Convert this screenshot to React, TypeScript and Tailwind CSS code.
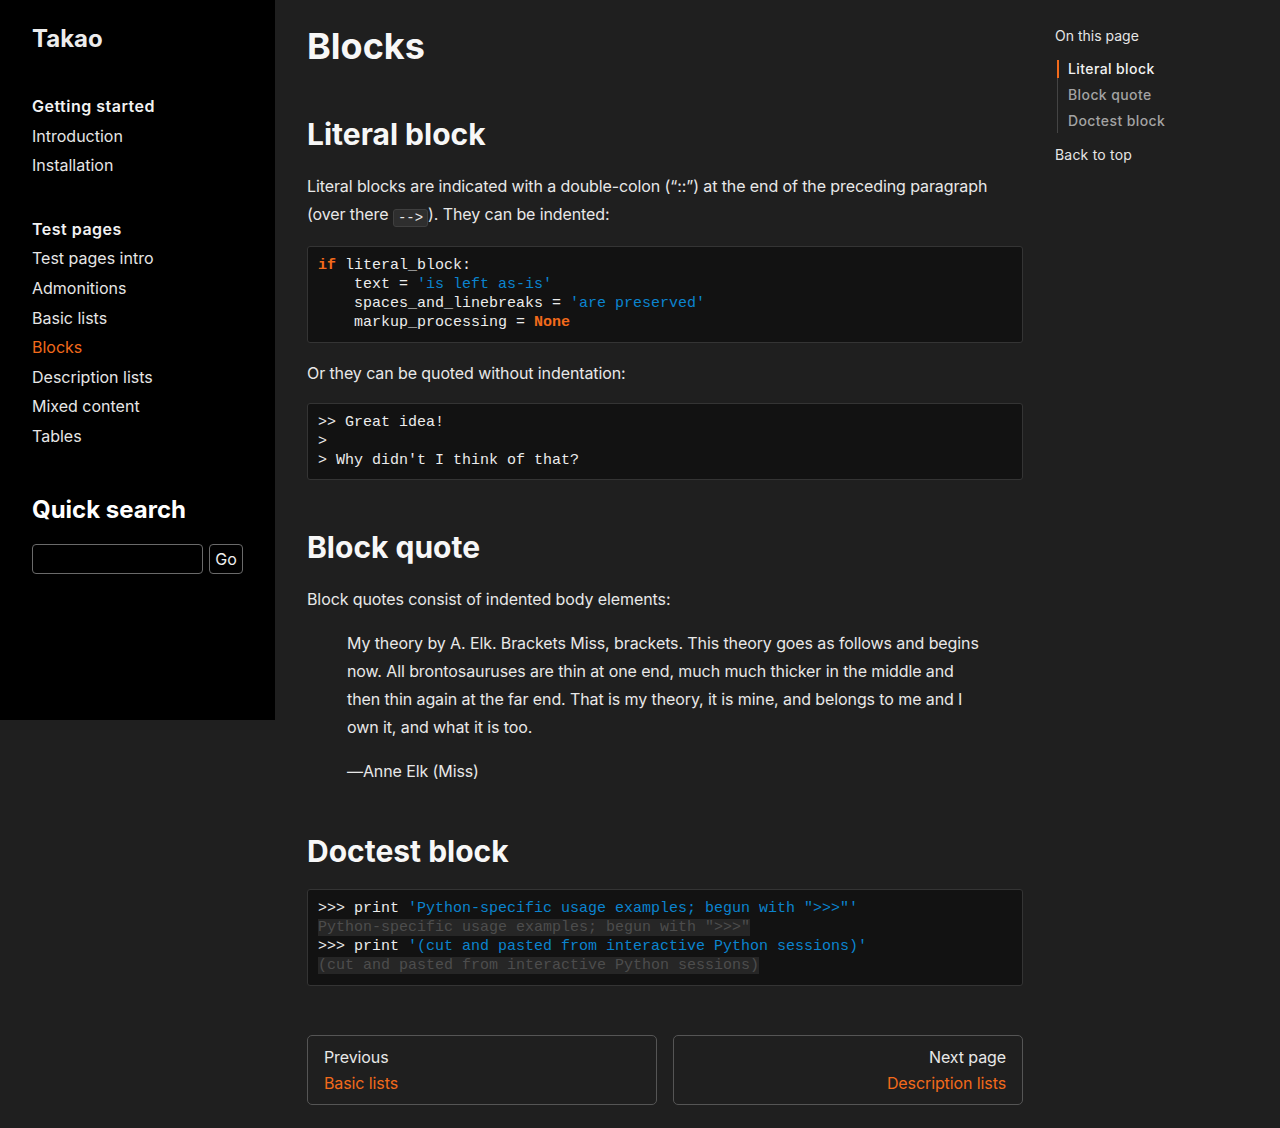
import React from 'react';

const ORANGE = 'text-[#f26a1b]';

const navGroups = [
  { title: 'Getting started', items: ['Introduction', 'Installation'] },
  {
    title: 'Test pages',
    items: ['Test pages intro', 'Admonitions', 'Basic lists', 'Blocks', 'Description lists', 'Mixed content', 'Tables'],
  },
];

const Sidebar: React.FC = () => (
  <aside className="w-[275px] h-[720px] shrink-0 bg-black pl-8 pr-8 pt-[23px] text-[#e6e6e6]">
    <div className="text-[24px] leading-8 font-bold text-[#ececec]">Takao</div>
    {navGroups.map((g, i) => (
      <div key={g.title} className={i === 0 ? 'mt-[37px]' : 'mt-[34px]'}>
        <div className="text-[16px] leading-[29.6px] font-semibold tracking-[0.5px] text-[#f2f2f2]">{g.title}</div>
        <ul>
          {g.items.map((it) => (
            <li
              key={it}
              className={`text-[16px] leading-[29.6px] ${it === 'Blocks' ? ORANGE : 'text-[#e6e6e6]'}`}
            >
              {it}
            </li>
          ))}
        </ul>
      </div>
    ))}
    <h3 className="mt-[42px] text-[24px] leading-8 font-bold text-white">Quick search</h3>
    <div className="mt-[18px] flex gap-[6px]">
      <input className="w-[171px] h-[30px] rounded-[4px] border border-[#6a6a6a] bg-black" />
      <button className="h-[30px] w-[34px] rounded-[4px] border border-[#6a6a6a] bg-black text-[16px] text-[#eee]">
        Go
      </button>
    </div>
  </aside>
);

const CodeBlock: React.FC<{ children: React.ReactNode }> = ({ children }) => (
  <pre className="border border-[#343434] rounded-[3px] bg-[#121212] pl-[10px] pr-[10px] pt-[9px] pb-[9.5px] font-['Liberation_Mono',monospace] text-[15px] leading-[19px] tracking-normal text-[#ececec]">
    {children}
  </pre>
);

const Str: React.FC<{ children: React.ReactNode }> = ({ children }) => (
  <span className="text-[#0b84cf]">{children}</span>
);
const Kw: React.FC<{ children: React.ReactNode }> = ({ children }) => (
  <span className="text-[#f26a1b] font-bold">{children}</span>
);
const Out: React.FC<{ children: React.ReactNode }> = ({ children }) => (
  <span className="bg-[#262626] text-[#4d4d4d]">{children}</span>
);

const Main: React.FC = () => (
  <main className="w-[716px] shrink-0 ml-8 pt-6 text-[16px] tracking-[-0.1px] text-[#e8e8e8]">
    <h1 className="text-[36px] leading-[44px] font-bold tracking-normal text-[#f7f7f7]">Blocks</h1>

    <h2 className="mt-12 text-[30px] leading-9 font-bold tracking-normal text-[#f7f7f7]">Literal block</h2>
    <p className="mt-5 leading-7">
      Literal blocks are indicated with a double-colon (“::”) at the end of the preceding paragraph (over there{' '}
      <code className="inline-block align-[-2px] h-[18px] rounded-[3px] border border-[#3f3f3f] bg-[#2e2e2e] px-[4px] font-['Liberation_Mono',monospace] text-[14px] leading-[16px] tracking-normal">
        --&gt;
      </code>
      ). They can be indented:
    </p>
    <div className="mt-[18px]">
      <CodeBlock>
        <Kw>if</Kw> literal_block:{'\n'}
        {'    '}text = <Str>'is left as-is'</Str>
        {'\n'}
        {'    '}spaces_and_linebreaks = <Str>'are preserved'</Str>
        {'\n'}
        {'    '}markup_processing = <Kw>None</Kw>
      </CodeBlock>
    </div>
    <p className="mt-4 leading-7">Or they can be quoted without indentation:</p>
    <div className="mt-4">
      <CodeBlock>
        {'>> Great idea!\n>\n> Why didn\'t I think of that?'}
      </CodeBlock>
    </div>

    <h2 className="mt-[49px] text-[30px] leading-9 font-bold tracking-normal text-[#f7f7f7]">Block quote</h2>
    <p className="mt-5 leading-7">Block quotes consist of indented body elements:</p>
    <blockquote className="ml-10 mr-[34px] mt-4 leading-7">
      <p>
        My theory by A. Elk. Brackets Miss, brackets. This theory goes as follows and begins now. All brontosauruses
        are thin at one end, much much thicker in the middle and then thin again at the far end. That is my theory, it
        is mine, and belongs to me and I own it, and what it is too.
      </p>
      <p className="mt-4">—Anne Elk (Miss)</p>
    </blockquote>

    <h2 className="mt-12 text-[30px] leading-9 font-bold tracking-normal text-[#f7f7f7]">Doctest block</h2>
    <div className="mt-5">
      <CodeBlock>
        {'>>> print '}
        <Str>'Python-specific usage examples; begun with "&gt;&gt;&gt;"'</Str>
        {'\n'}
        <Out>Python-specific usage examples; begun with "&gt;&gt;&gt;"</Out>
        {'\n>>> print '}
        <Str>'(cut and pasted from interactive Python sessions)'</Str>
        {'\n'}
        <Out>(cut and pasted from interactive Python sessions)</Out>
      </CodeBlock>
    </div>

    <div className="mt-[49px] mb-6 grid grid-cols-2 gap-4">
      <div className="h-[70px] rounded-[5px] border border-[#555] px-4 pt-[8px] leading-[26px]">
        <div className="text-[#e8e8e8]">Previous</div>
        <div className={ORANGE}>Basic lists</div>
      </div>
      <div className="h-[70px] rounded-[5px] border border-[#555] px-4 pt-[8px] leading-[26px] text-right">
        <div className="text-[#e8e8e8]">Next page</div>
        <div className={ORANGE}>Description lists</div>
      </div>
    </div>
  </main>
);

const Toc: React.FC = () => (
  <nav className="ml-8 pt-[26px] w-[193px] text-[14px]">
    <div className="leading-5 text-[#e6e6e6]">On this page</div>
    <ul className="mt-[14px] ml-[2px] border-l border-[#444]">
      <li className="relative pl-[10px] leading-[18px] tracking-[0.4px] text-[#f2f2f2] font-medium">
        <span className="absolute left-[-1px] top-0 h-full w-[2px] bg-[#f26a1b]" />
        Literal block
      </li>
      <li className="pl-[10px] mt-[8px] leading-[18px] tracking-[0.4px] text-[#a3a3a3] font-medium">Block quote</li>
      <li className="pl-[10px] mt-[8px] pb-[3px] leading-[18px] tracking-[0.4px] text-[#a3a3a3] font-medium">
        Doctest block
      </li>
    </ul>
    <div className="mt-[12px] leading-5 tracking-[0.2px] text-[#e6e6e6]">Back to top</div>
  </nav>
);

export default function App() {
  return (
    <div className="min-h-[1128px] bg-[#1f1f1f] font-['Inter',sans-serif] flex items-start">
      <Sidebar />
      <Main />
      <Toc />
    </div>
  );
}
